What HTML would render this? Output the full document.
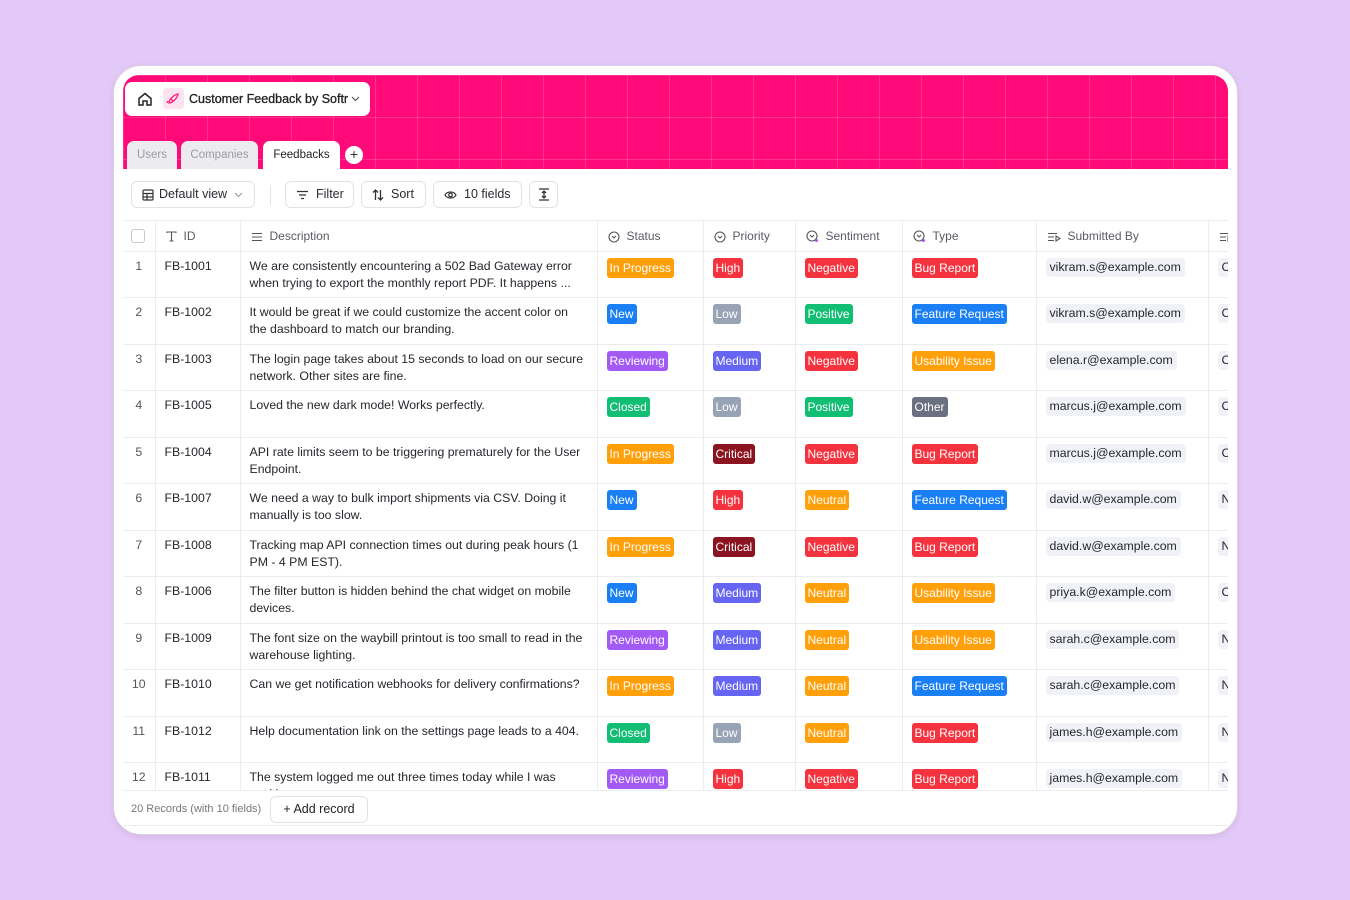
<!DOCTYPE html>
<html><head><meta charset="utf-8"><style>
*{box-sizing:border-box;margin:0;padding:0}
body{width:1350px;height:900px;background:#e3c9f7;font-family:"Liberation Sans",sans-serif;position:relative;overflow:hidden;color:#2b2b33}
.frame{position:absolute;left:113px;top:65px;width:1125px;height:770px;background:#fff;border-radius:28px;border:1px solid #d9d0e3;box-shadow:0 2px 6px rgba(120,80,160,.15)}
.hdr{position:absolute;left:123px;top:75px;width:1105px;height:94px;background:#ff0a78;border-radius:16px 16px 0 0;
background-image:linear-gradient(90deg,rgba(255,255,255,.15) 1px,transparent 1px),linear-gradient(rgba(255,255,255,.15) 1px,transparent 1px);background-size:42px 42px}
.app{position:absolute;left:125px;top:82px;width:245px;height:34px;background:#fff;border-radius:7px;font-size:12.5px;color:#222}
.tab{position:absolute;top:141px;height:28px;border-radius:7px 7px 0 0;background:#ececf0;color:#9a9aa4;font-size:11.5px;line-height:28px;text-align:center}
.tab.on{background:#fff;color:#222}
.btn{position:absolute;top:181px;height:27px;border:1px solid #e2e2e6;border-radius:6px;background:#fff;font-size:12.5px;line-height:25px;color:#2b2b33;padding-left:10px}
.tbl{position:absolute;left:123px;top:220px;width:1105px;height:570px;overflow:hidden;border-top:1px solid #ececef}
table{border-collapse:collapse;table-layout:fixed;width:1145px;font-size:12.3px}
td,th{border-right:1px solid #ececef;border-bottom:1px solid #ececef;vertical-align:top;overflow:hidden}
th{height:30px;font-weight:normal;text-align:left;color:#5a5a63;font-size:12px;vertical-align:middle;padding-left:10px;white-space:nowrap}
td{height:46.5px;padding:6px 8px 0 9px;line-height:17px;color:#26262d}
td.n{text-align:center;color:#555;padding-left:0;padding-right:0}
.b{display:inline-block;color:#fff;font-size:12px;line-height:20px;height:20px;padding:0 3px;border-radius:3px}
.o{background:#ff9f0a}.r{background:#f5333f}.g{background:#12be74}.bl{background:#1a7ff5}.gr{background:#98a4b5}.p{background:#a35af5}.m{background:#6665f2}.c{background:#8b1420}.ot{background:#6b7080}
.em{display:inline-block;background:#f0f2f7;border-radius:4px;padding:0 4px;line-height:19px}
.ic{display:inline-block;vertical-align:middle;margin-right:7px}
.foot{position:absolute;left:123px;top:790px;width:1105px;height:36px;border-bottom:1px solid #ececef;border-top:1px solid #ececef;font-size:11px;color:#777}
</style></head><body>
<div class="frame"></div>
<div class="hdr"></div>
<div class="app">
<svg style="position:absolute;left:12px;top:9px" width="16" height="16" viewBox="0 0 16 16" fill="none" stroke="#222" stroke-width="1.5"><path d="M2 7.5L8 2.5l6 5V14H10V10H6v4H2z"/></svg>
<div style="position:absolute;left:38px;top:6px;width:21px;height:21px;background:#fde3ef;border-radius:4px"><svg width="21" height="21" viewBox="0 0 21 21" fill="none" stroke="#ff1b7f" stroke-width="1.3"><path d="M6 15c0-3 4-8 9-9-1 5-6 9-9 9zM8 11l2 2M5 13l-1 2"/></svg></div>
<span style="position:absolute;left:64px;top:10px;font-weight:normal;-webkit-text-stroke:0.3px #222">Customer Feedback by Softr</span>
<svg style="position:absolute;left:226px;top:14px" width="9" height="6" viewBox="0 0 9 6" fill="none" stroke="#555" stroke-width="1.2"><path d="M1 1l3.5 3.5L8 1"/></svg>
</div>
<div class="tab" style="left:127px;width:50px">Users</div>
<div class="tab" style="left:181px;width:77px">Companies</div>
<div class="tab on" style="left:263px;width:77px">Feedbacks</div>
<div style="position:absolute;left:345px;top:146px;width:18px;height:18px;border-radius:50%;background:#fff;color:#333;font-size:14px;line-height:17px;text-align:center">+</div>

<div class="btn" style="left:131px;width:124px"><svg class="ic" style="margin-right:5px" width="12" height="12" viewBox="0 0 12 12" fill="none" stroke="#333" stroke-width="1.2"><rect x="1" y="1" width="10" height="10" rx="1"/><path d="M1 4.5h10M1 8h10M5 4.5V11"/></svg>Default view <svg width="9" height="6" viewBox="0 0 9 6" fill="none" stroke="#999" stroke-width="1.1" style="margin-left:3px"><path d="M1 1l3.5 3.5L8 1"/></svg></div>
<div style="position:absolute;left:270px;top:185px;width:1px;height:20px;background:#e3e3e6"></div>
<div class="btn" style="left:285px;width:69px"><svg class="ic" width="13" height="10" viewBox="0 0 13 10" fill="none" stroke="#333" stroke-width="1.3"><path d="M1 1.5h11M3 5h7M5 8.5h3"/></svg>Filter</div>
<div class="btn" style="left:361px;width:65px"><svg class="ic" width="12" height="12" viewBox="0 0 12 12" fill="none" stroke="#333" stroke-width="1.3"><path d="M3.5 11V1M1 3.5L3.5 1 6 3.5M8.5 1v10M6 8.5l2.5 2.5L11 8.5"/></svg>Sort</div>
<div class="btn" style="left:433px;width:89px"><svg class="ic" width="13" height="10" viewBox="0 0 13 10" fill="none" stroke="#333" stroke-width="1.2"><path d="M1 5c2-4 9-4 11 0-2 4-9 4-11 0z"/><circle cx="6.5" cy="5" r="1.8"/></svg>10 fields</div>
<div class="btn" style="left:529px;width:29px;padding-left:8px"><svg width="12" height="13" viewBox="0 0 12 13" fill="none" stroke="#333" stroke-width="1.3" style="vertical-align:middle"><path d="M1 1h10M1 12h10M6 3v7M4 5l2-2 2 2M4 8l2 2 2-2"/></svg></div>

<div class="tbl"><table>
<colgroup><col style="width:32px"><col style="width:85px"><col style="width:357px"><col style="width:106px"><col style="width:92px"><col style="width:107px"><col style="width:134px"><col style="width:172px"><col style="width:60px"></colgroup>
<tr><th style="padding-left:8px"><span style="display:inline-block;width:14px;height:14px;border:1px solid #c8c8cd;border-radius:3px;vertical-align:middle"></span></th>
<th><svg class="ic" width="11" height="11" viewBox="0 0 11 11" fill="none" stroke="#555" stroke-width="1.1"><path d="M1 2V1h9v1M5.5 1v9M3.5 10h4"/></svg>ID</th>
<th><svg class="ic" width="12" height="10" viewBox="0 0 12 10" fill="none" stroke="#555" stroke-width="1.1"><path d="M1 1.5h10M1 5h10M1 8.5h10"/></svg>Description</th>
<th><svg class="ic" width="12" height="12" viewBox="0 0 12 12" fill="none" stroke="#555" stroke-width="1.1"><circle cx="6" cy="6" r="5"/><path d="M4 5l2 2 2-2"/></svg>Status</th>
<th><svg class="ic" width="12" height="12" viewBox="0 0 12 12" fill="none" stroke="#555" stroke-width="1.1"><circle cx="6" cy="6" r="5"/><path d="M4 5l2 2 2-2"/></svg>Priority</th>
<th><svg class="ic" width="13" height="13" viewBox="0 0 13 13" fill="none" stroke="#555" stroke-width="1.1"><circle cx="6" cy="6" r="5"/><path d="M4 5l2 2 2-2"/><circle cx="10.5" cy="10.5" r="1.5" fill="#b04bf0" stroke="none"/></svg>Sentiment</th>
<th><svg class="ic" width="13" height="13" viewBox="0 0 13 13" fill="none" stroke="#555" stroke-width="1.1"><circle cx="6" cy="6" r="5"/><path d="M4 5l2 2 2-2"/><circle cx="10.5" cy="10.5" r="1.5" fill="#b04bf0" stroke="none"/></svg>Type</th>
<th><svg class="ic" width="14" height="10" viewBox="0 0 14 10" fill="none" stroke="#555" stroke-width="1.1"><path d="M1 1.5h9M1 5h6M1 8.5h6M9 4l4 2.5L9 9z"/></svg>Submitted By</th>
<th><svg class="ic" width="14" height="10" viewBox="0 0 14 10" fill="none" stroke="#555" stroke-width="1.1"><path d="M1 1.5h9M1 5h6M1 8.5h6M9 4l4 2.5L9 9z"/></svg></th></tr>
<tr><td class="n">1</td><td>FB-1001</td><td>We are consistently encountering a 502 Bad Gateway error when trying to export the monthly report PDF. It happens ...</td><td><span class="b o">In Progress</span></td><td><span class="b r">High</span></td><td><span class="b r">Negative</span></td><td><span class="b r">Bug Report</span></td><td><span class="em">vikram.s@example.com</span></td><td><span class="em">C</span></td></tr>
<tr><td class="n">2</td><td>FB-1002</td><td>It would be great if we could customize the accent color on the dashboard to match our branding.</td><td><span class="b bl">New</span></td><td><span class="b gr">Low</span></td><td><span class="b g">Positive</span></td><td><span class="b bl">Feature Request</span></td><td><span class="em">vikram.s@example.com</span></td><td><span class="em">C</span></td></tr>
<tr><td class="n">3</td><td>FB-1003</td><td>The login page takes about 15 seconds to load on our secure network. Other sites are fine.</td><td><span class="b p">Reviewing</span></td><td><span class="b m">Medium</span></td><td><span class="b r">Negative</span></td><td><span class="b o">Usability Issue</span></td><td><span class="em">elena.r@example.com</span></td><td><span class="em">C</span></td></tr>
<tr><td class="n">4</td><td>FB-1005</td><td>Loved the new dark mode! Works perfectly.</td><td><span class="b g">Closed</span></td><td><span class="b gr">Low</span></td><td><span class="b g">Positive</span></td><td><span class="b ot">Other</span></td><td><span class="em">marcus.j@example.com</span></td><td><span class="em">C</span></td></tr>
<tr><td class="n">5</td><td>FB-1004</td><td>API rate limits seem to be triggering prematurely for the User Endpoint.</td><td><span class="b o">In Progress</span></td><td><span class="b c">Critical</span></td><td><span class="b r">Negative</span></td><td><span class="b r">Bug Report</span></td><td><span class="em">marcus.j@example.com</span></td><td><span class="em">C</span></td></tr>
<tr><td class="n">6</td><td>FB-1007</td><td>We need a way to bulk import shipments via CSV. Doing it manually is too slow.</td><td><span class="b bl">New</span></td><td><span class="b r">High</span></td><td><span class="b o">Neutral</span></td><td><span class="b bl">Feature Request</span></td><td><span class="em">david.w@example.com</span></td><td><span class="em">N</span></td></tr>
<tr><td class="n">7</td><td>FB-1008</td><td>Tracking map API connection times out during peak hours (1 PM - 4 PM EST).</td><td><span class="b o">In Progress</span></td><td><span class="b c">Critical</span></td><td><span class="b r">Negative</span></td><td><span class="b r">Bug Report</span></td><td><span class="em">david.w@example.com</span></td><td><span class="em">N</span></td></tr>
<tr><td class="n">8</td><td>FB-1006</td><td>The filter button is hidden behind the chat widget on mobile devices.</td><td><span class="b bl">New</span></td><td><span class="b m">Medium</span></td><td><span class="b o">Neutral</span></td><td><span class="b o">Usability Issue</span></td><td><span class="em">priya.k@example.com</span></td><td><span class="em">C</span></td></tr>
<tr><td class="n">9</td><td>FB-1009</td><td>The font size on the waybill printout is too small to read in the warehouse lighting.</td><td><span class="b p">Reviewing</span></td><td><span class="b m">Medium</span></td><td><span class="b o">Neutral</span></td><td><span class="b o">Usability Issue</span></td><td><span class="em">sarah.c@example.com</span></td><td><span class="em">N</span></td></tr>
<tr><td class="n">10</td><td>FB-1010</td><td>Can we get notification webhooks for delivery confirmations?</td><td><span class="b o">In Progress</span></td><td><span class="b m">Medium</span></td><td><span class="b o">Neutral</span></td><td><span class="b bl">Feature Request</span></td><td><span class="em">sarah.c@example.com</span></td><td><span class="em">N</span></td></tr>
<tr><td class="n">11</td><td>FB-1012</td><td>Help documentation link on the settings page leads to a 404.</td><td><span class="b g">Closed</span></td><td><span class="b gr">Low</span></td><td><span class="b o">Neutral</span></td><td><span class="b r">Bug Report</span></td><td><span class="em">james.h@example.com</span></td><td><span class="em">N</span></td></tr>
<tr><td class="n">12</td><td>FB-1011</td><td>The system logged me out three times today while I was working on a report.</td><td><span class="b p">Reviewing</span></td><td><span class="b r">High</span></td><td><span class="b r">Negative</span></td><td><span class="b r">Bug Report</span></td><td><span class="em">james.h@example.com</span></td><td><span class="em">N</span></td></tr>
</table></div>
<div class="foot"><span style="position:absolute;left:8px;top:12px">20 Records (with 10 fields)</span>
<div style="position:absolute;left:147px;top:5px;width:98px;height:27px;border:1px solid #e2e2e6;border-radius:6px;font-size:12.5px;color:#222;line-height:25px;text-align:center">+ Add record</div></div>
</body></html>
